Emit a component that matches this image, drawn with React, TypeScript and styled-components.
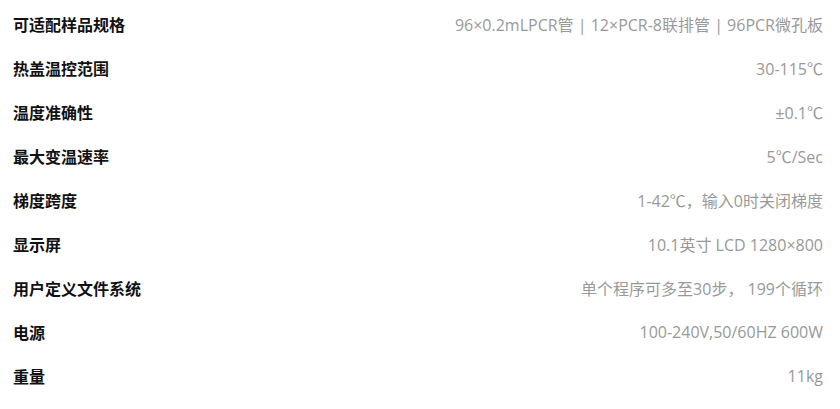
import React from 'react';
import styled, { createGlobalStyle } from 'styled-components';

const GlobalStyle = createGlobalStyle`
	html, body {
		margin: 0;
		padding: 0;
		background: #fff;
	}
`;

const specs: [string, string][] = [
	['可适配样品规格', '96×0.2mLPCR管 | 12×PCR-8联排管 | 96PCR微孔板'],
	['热盖温控范围', '30-115℃'],
	['温度准确性', '±0.1℃'],
	['最大变温速率', '5℃/Sec'],
	['梯度跨度', '1-42℃，输入0时关闭梯度'],
	['显示屏', '10.1英寸 LCD 1280×800'],
	['用户定义文件系统', '单个程序可多至30步， 199个循环'],
	['电源', '100-240V,50/60HZ 600W'],
	['重量', '11kg'],
];

function App() {
	return (
		<>
			<GlobalStyle />
			<SpecTable>
				{specs.map(([label, value]) => (
					<Row key={label}>
						<Label>{label}</Label>
						<Value>{value}</Value>
					</Row>
				))}
			</SpecTable>
		</>
	);
}

const SpecTable = styled.div`
	display: flex;
	flex-direction: column;
	padding: 2px 17px 10px 13px;
`;

const Row = styled.div`
	display: flex;
	align-items: center;
	justify-content: space-between;
	height: 44px;
`;

const Label = styled.div`
	font-family: 'Noto Sans CJK SC', 'Noto Sans', sans-serif;
	font-weight: 700;
	font-size: 16px;
	color: #111;
`;

const Value = styled.div`
	font-family: 'Open Sans', 'Noto Sans CJK SC', sans-serif;
	font-size: 16px;
	color: #999;
	white-space: nowrap;
`;

export default App;
